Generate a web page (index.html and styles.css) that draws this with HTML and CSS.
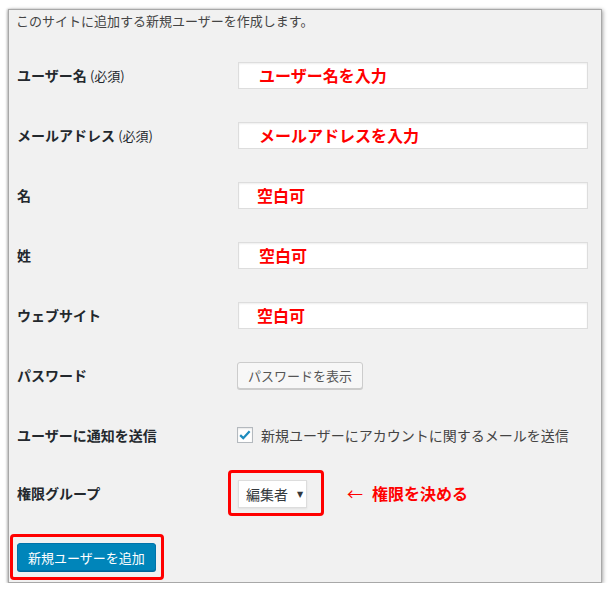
FILE: index.html
```html
<!DOCTYPE html>
<html lang="ja">
<head>
<meta charset="utf-8">
<title>新規ユーザーを追加</title>
<link rel="stylesheet" href="styles.css">
</head>
<body>
<div class="panel">
  <p class="intro">このサイトに追加する新規ユーザーを作成します。</p>
  <div class="row">
    <div class="label">ユーザー名 <span class="req">(必須)</span></div>
    <div class="field"><div class="input"><span class="note">ユーザー名を入力</span></div></div>
  </div>
  <div class="row">
    <div class="label">メールアドレス <span class="req">(必須)</span></div>
    <div class="field"><div class="input"><span class="note">メールアドレスを入力</span></div></div>
  </div>
  <div class="row">
    <div class="label">名</div>
    <div class="field"><div class="input tight"><span class="note">空白可</span></div></div>
  </div>
  <div class="row">
    <div class="label">姓</div>
    <div class="field"><div class="input"><span class="note">空白可</span></div></div>
  </div>
  <div class="row">
    <div class="label">ウェブサイト</div>
    <div class="field"><div class="input tight"><span class="note">空白可</span></div></div>
  </div>
  <div class="row">
    <div class="label">パスワード</div>
    <div class="field"><button class="btn">パスワードを表示</button></div>
  </div>
  <div class="row">
    <div class="label">ユーザーに通知を送信</div>
    <div class="field">
      <span class="checkbox"><svg viewBox="0 0 16 16" width="14" height="14"><path d="M2.5 8.2 L6 11.6 L13.3 3.6" fill="none" stroke="#1e8cbe" stroke-width="2.6"/></svg></span>
      <span class="cbtext">新規ユーザーにアカウントに関するメールを送信</span>
    </div>
  </div>
  <div class="row last">
    <div class="label">権限グループ</div>
    <div class="field">
      <div class="redbox selbox"><div class="select"><span>編集者</span><span class="arrow">▼</span></div></div>
      <span class="arrownote"><span class="larr">←</span>権限を決める</span>
    </div>
  </div>
  <div class="submit">
    <div class="redbox btnbox"><button class="primary">新規ユーザーを追加</button></div>
  </div>
</div>
</body>
</html>
```
FILE: styles.css
```css
html, body {
  margin: 0;
  padding: 0;
  background: #fff;
}
body {
  font-family: "Noto Sans CJK JP", "Noto Sans", sans-serif;
  color: #23282d;
}
.panel {
  box-sizing: border-box;
  margin: 9px 0 0 8px;
  width: 594px;
  height: 574px;
  background: #f1f1f1;
  border: 1px solid #a8a8a8;
  box-shadow: 1px 1px 4px rgba(0,0,0,0.35), -1px 0 2px rgba(0,0,0,0.2);
  padding: 1px 0 0 7px;
}
.intro {
  margin: 0;
  font-size: 13px;
  line-height: 20px;
  color: #444;
  height: 34px;
}
.row {
  display: flex;
  align-items: center;
  height: 60px;
  padding-left: 1px;
}
.row.last {
  height: 56px;
}
.label {
  width: 221px;
  flex: none;
  font-size: 14px;
  font-weight: 600;
  line-height: 20px;
}
.req {
  font-size: 13px;
  font-weight: 400;
  color: #23282d;
}
.field {
  display: flex;
  align-items: center;
}
.input {
  box-sizing: border-box;
  width: 350px;
  height: 27px;
  background: #fff;
  border: 1px solid #ddd;
  box-shadow: inset 0 1px 2px rgba(0,0,0,0.07);
  padding-left: 20px;
  display: flex;
  align-items: center;
}
.input.tight {
  padding-left: 18px;
}
.note {
  color: #ff0000;
  font-weight: 700;
  font-size: 16px;
  line-height: 20px;
}
.btn {
  box-sizing: border-box;
  margin: 0 0 0 -1px;
  height: 27px;
  padding: 0 10px;
  font-family: inherit;
  font-size: 13px;
  color: #555;
  background: #f7f7f7;
  border: 1px solid #ccc;
  border-radius: 3px;
  box-shadow: 0 1px 0 #ccc;
}
.checkbox {
  box-sizing: border-box;
  width: 16px;
  height: 16px;
  margin-left: -1px;
  background: #fff;
  border: 1px solid #b4b9be;
  box-shadow: inset 0 1px 2px rgba(0,0,0,0.1);
  display: flex;
  align-items: center;
  justify-content: center;
}
.cbtext {
  margin-left: 8px;
  font-size: 14px;
  line-height: 20px;
  color: #444;
}
.redbox {
  border: 3px solid #ff0000;
  border-radius: 4px;
  display: flex;
}
.selbox {
  margin-left: -10px;
  padding: 7px 14px 5px 7px;
}
.select {
  box-sizing: border-box;
  width: 69px;
  height: 28px;
  background: #fff;
  border: 1px solid #ddd;
  box-shadow: 0 1px 2px rgba(0,0,0,0.07);
  display: flex;
  align-items: center;
  padding-left: 7px;
  font-size: 14px;
  color: #32373c;
}
.arrow {
  font-size: 8px;
  margin-left: 9px;
  color: #32373c;
  font-family: "DejaVu Sans", sans-serif;
}
.arrownote {
  margin-left: 23px;
  color: #ff0000;
  font-weight: 700;
  font-size: 16px;
  display: flex;
  align-items: center;
}
.larr {
  display: inline-block;
  width: 16px;
  margin-right: 9px;
  font-weight: 400;
}
.submit {
  margin-left: -6px;
  margin-top: 13px;
}
.btnbox {
  display: inline-flex;
  padding: 6px 5px 6px 4px;
}
.primary {
  box-sizing: border-box;
  margin: 0;
  height: 28px;
  padding: 0 10px;
  font-family: inherit;
  font-size: 13px;
  color: #fff;
  background: #0085ba;
  border: 1px solid #0073aa;
  border-radius: 3px;
  box-shadow: 0 1px 0 #006799;
}
```
